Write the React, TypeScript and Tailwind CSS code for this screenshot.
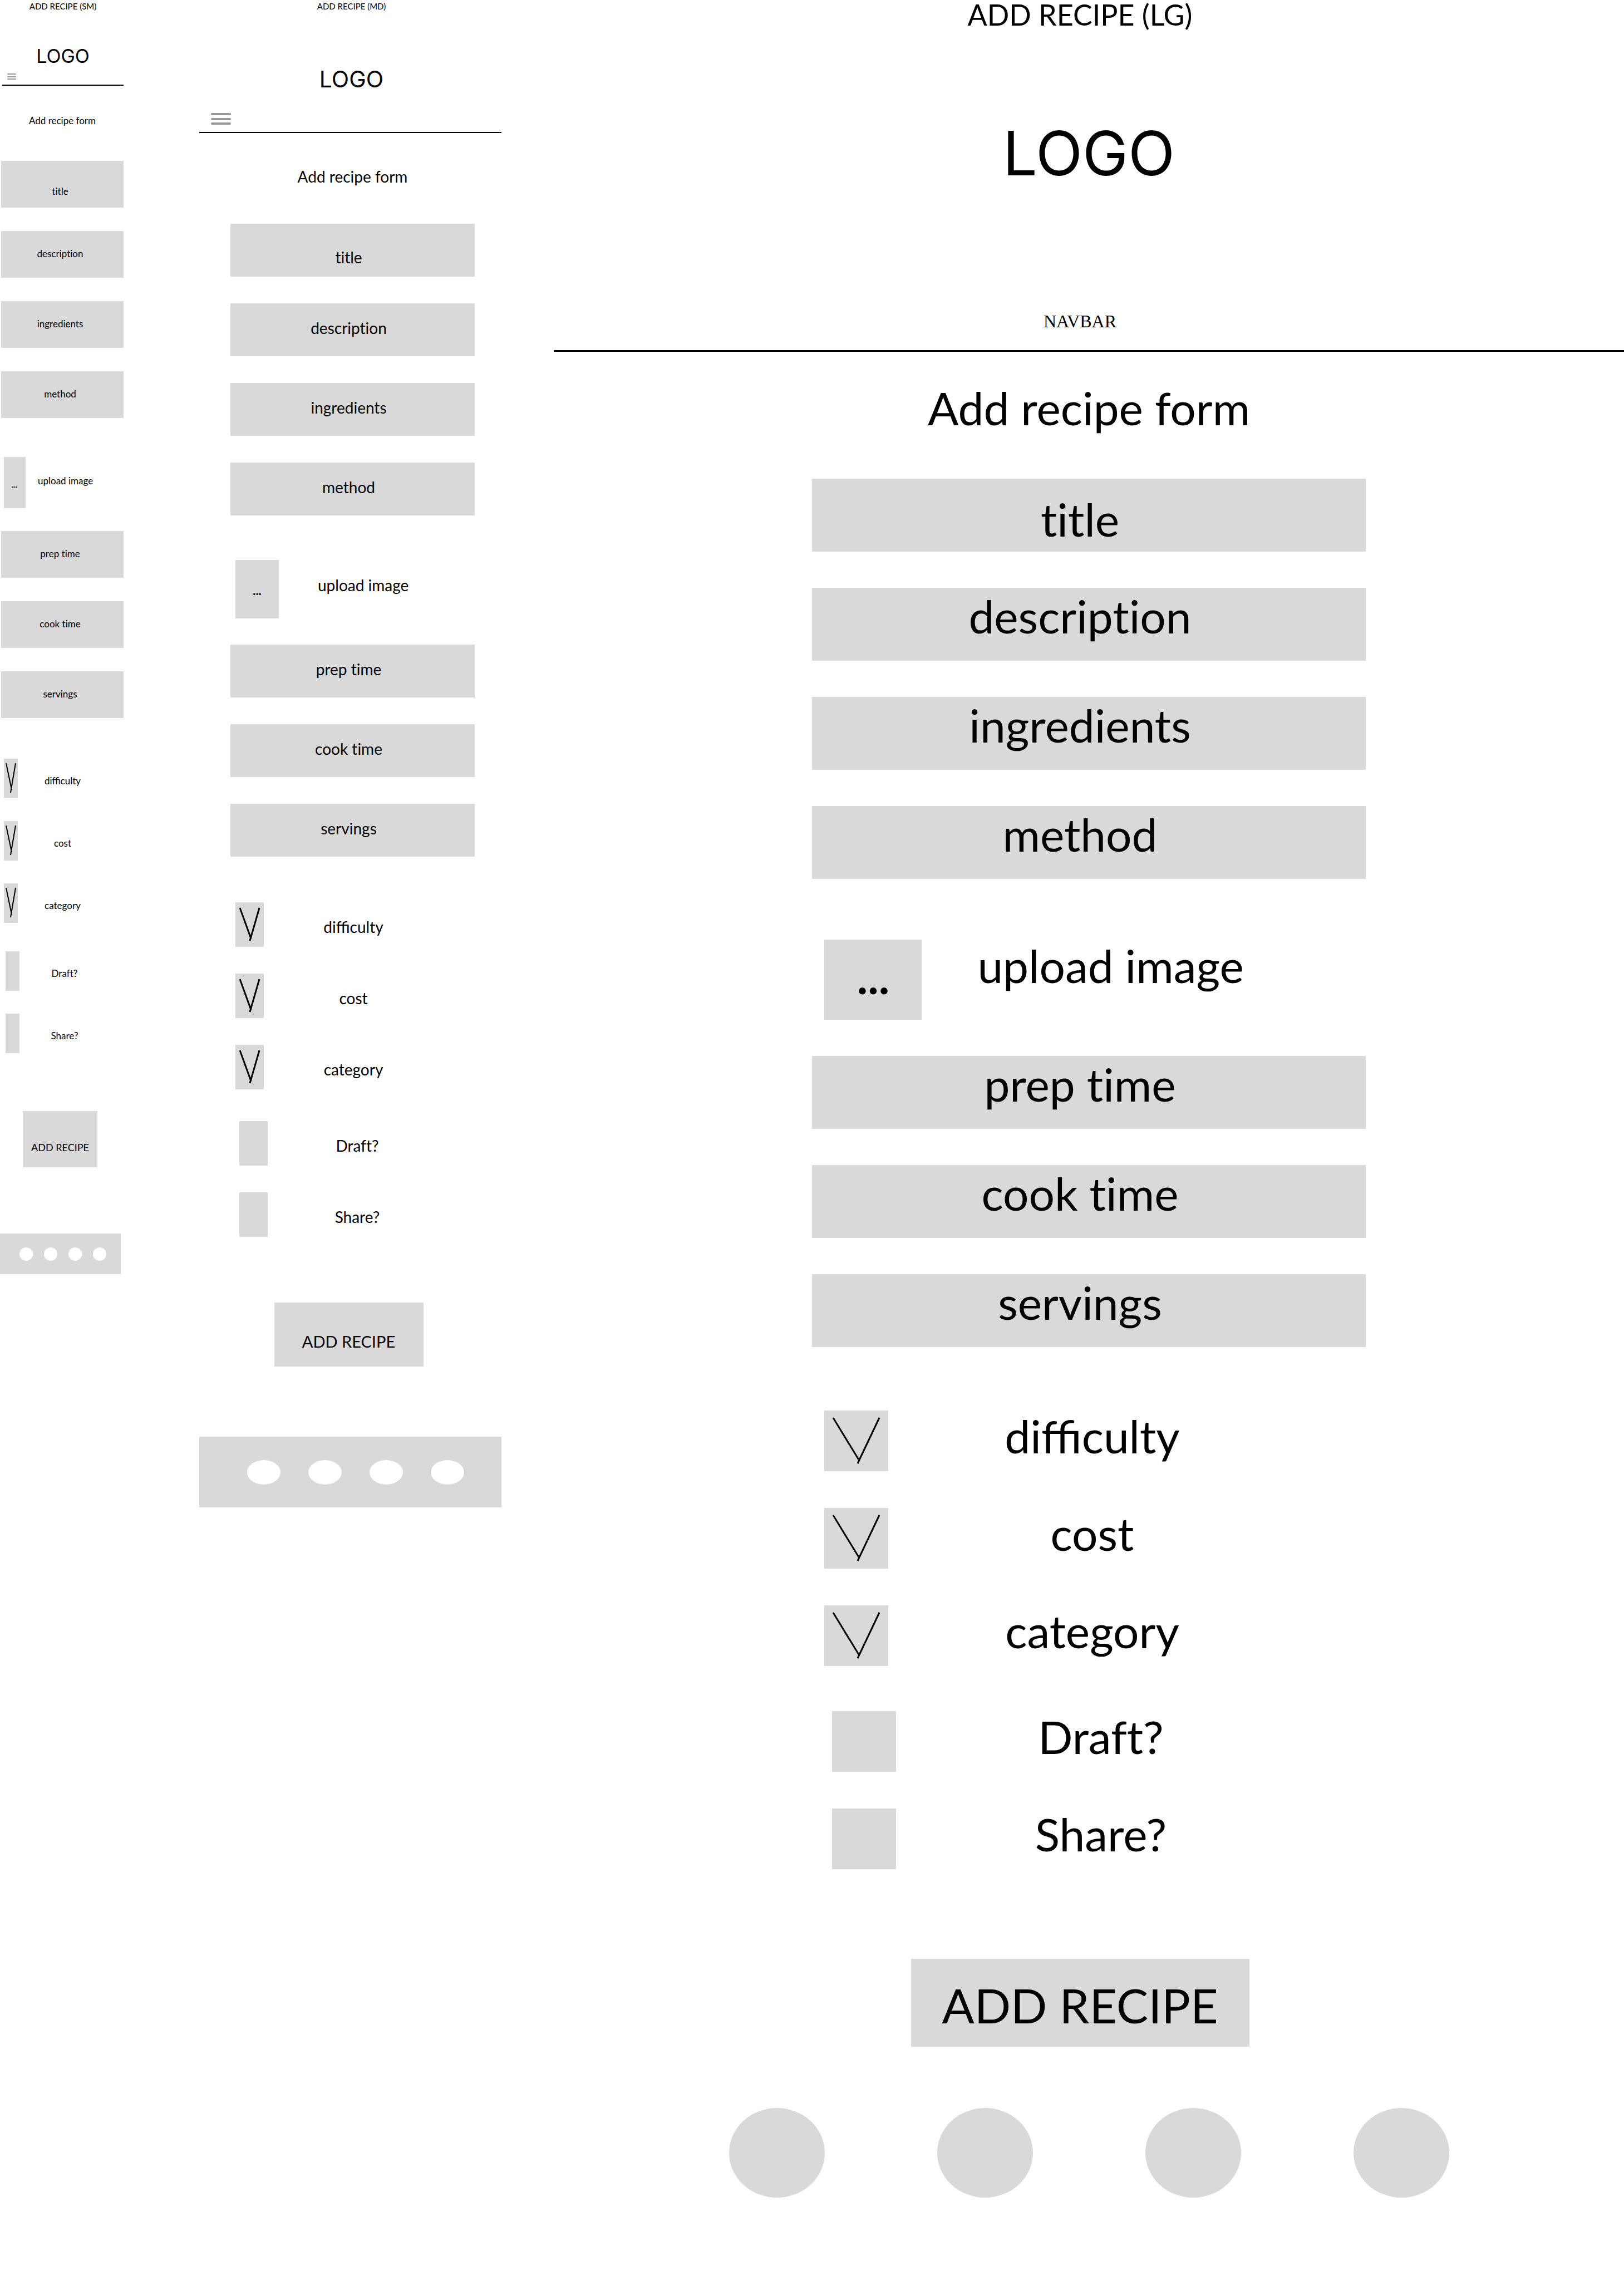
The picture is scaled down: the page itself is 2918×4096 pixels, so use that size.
import React from "react";

type Theme = {
  id: string;
  text: string;
  fields: string;
  field: string;
  titlePad: string;
  fieldPad: string;
  uploadRow: string;
  uploadBox: string;
  uploadLabel: string;
  groupGap: string;
  selects: string;
  selectRow: string;
  box: string;
  optionLabel: string;
  checks: string;
  checkRow: string;
  button: string;
  chevron: { viewBox: string; d: string; stroke: number };
};

const sm: Theme = {
  id: "sm",
  text: "text-[17px]",
  fields: "gap-[42px]",
  field: "h-[84px] pr-2",
  titlePad: "pt-6",
  fieldPad: "pb-1",
  uploadRow: "mt-[70px] mb-[41px] pl-[5px]",
  uploadBox: "h-[92px] w-[39px] pt-2 text-[14px]",
  uploadLabel: "pl-[22px] pb-2",
  groupGap: "mt-[73px]",
  selects: "gap-[41px]",
  selectRow: "pl-[5px] pr-[29px]",
  box: "h-[71px] w-[25px]",
  optionLabel: "pt-2",
  checks: "mt-[51px] gap-[41px]",
  checkRow: "pl-2 pr-[25px]",
  button: "mt-[104px] h-[101px] w-[134px] mr-2 pt-7 text-[18px]",
  chevron: { viewBox: "0 0 25 71", d: "M4 8 L14 56 M21 8 L12 61", stroke: 2 },
};

const md: Theme = {
  id: "md",
  text: "text-[28px]",
  fields: "gap-12",
  field: "h-[95px] pr-[14px]",
  titlePad: "pt-6",
  fieldPad: "pb-2",
  uploadRow: "mt-20 mb-[47px] pl-[9px]",
  uploadBox: "h-[105px] w-[78px] pt-1 text-[22px]",
  uploadLabel: "pl-[70px] pb-4",
  groupGap: "mt-[82px]",
  selects: "gap-12",
  selectRow: "pl-[9px] pr-[57px]",
  box: "h-20 w-[51px]",
  optionLabel: "pt-2",
  checks: "mt-[57px] gap-12",
  checkRow: "pl-4 pr-[50px]",
  button: "mt-[118px] h-[115px] w-[268px] mr-[14px] pt-6 text-[29px]",
  chevron: { viewBox: "0 0 51 80", d: "M8 10 L28 65 M43 10 L26 69", stroke: 3 },
};

const lg: Theme = {
  id: "lg",
  text: "text-[82px]",
  fields: "gap-[65px]",
  field: "h-[131px] pr-8",
  titlePad: "pt-3",
  fieldPad: "pb-8",
  uploadRow: "mt-[109px] mb-[65px] pl-[22px]",
  uploadBox: "h-36 w-[175px] text-[82px] pb-3",
  uploadLabel: "pl-[100px] pb-[52px]",
  groupGap: "mt-[114px]",
  selects: "gap-[66px]",
  selectRow: "pl-[22px] pr-[125px]",
  box: "h-[109px] w-[115px]",
  optionLabel: "pb-5",
  checks: "mt-[81px] gap-[66px]",
  checkRow: "pl-9 pr-[108px]",
  button: "mt-[161px] h-[158px] w-[608px] mr-8 pt-2 text-[86px]",
  chevron: { viewBox: "0 0 115 109", d: "M16 13 L63 90 M99 13 L60 95", stroke: 3 },
};

function Fields({ names, t }: { names: string[]; t: Theme }) {
  return (
    <div className={`flex flex-col ${t.fields}`}>
      {names.map((name) => (
        <input
          key={name}
          type="text"
          aria-label={name}
          placeholder={name}
          className={`w-full bg-[#d9d9d9] text-center [font-variant-ligatures:none] placeholder:text-black placeholder:opacity-100 ${t.field} ${
            name === "title" ? t.titlePad : t.fieldPad
          }`}
        />
      ))}
    </div>
  );
}

function RecipeForm({ t }: { t: Theme }) {
  return (
    <form className={`flex flex-col leading-none ${t.text}`} onSubmit={(e) => e.preventDefault()}>
      <Fields t={t} names={["title", "description", "ingredients", "method"]} />

      <div className={`relative flex ${t.uploadRow}`}>
        <input id={`${t.id}-upload`} type="file" className="sr-only" />
        <label
          htmlFor={`${t.id}-upload`}
          className={`flex shrink-0 items-center justify-center bg-[#d9d9d9] font-bold ${t.uploadBox}`}
        >
          ...
        </label>
        <label htmlFor={`${t.id}-upload`} className={`flex items-center whitespace-nowrap ${t.uploadLabel}`}>
          upload image
        </label>
      </div>

      <Fields t={t} names={["prep time", "cook time", "servings"]} />

      <div className={`flex flex-col ${t.groupGap} ${t.selects}`}>
        {["difficulty", "cost", "category"].map((name) => (
          <div key={name} className={`flex ${t.selectRow}`}>
            <div className={`relative shrink-0 ${t.box}`}>
              <select id={`${t.id}-${name}`} className="size-full appearance-none bg-[#d9d9d9]">
                <option value="" />
              </select>
              <svg
                viewBox={t.chevron.viewBox}
                className="pointer-events-none absolute inset-0 size-full"
                fill="none"
                stroke="black"
                strokeWidth={t.chevron.stroke}
              >
                <path d={t.chevron.d} />
              </svg>
            </div>
            <label
              htmlFor={`${t.id}-${name}`}
              className={`flex flex-1 items-center justify-center ${t.optionLabel}`}
            >
              {name}
            </label>
          </div>
        ))}
      </div>

      <div className={`flex flex-col ${t.checks}`}>
        {["Draft?", "Share?"].map((name) => (
          <div key={name} className={`flex ${t.checkRow}`}>
            <input
              id={`${t.id}-${name}`}
              type="checkbox"
              className={`shrink-0 appearance-none bg-[#d9d9d9] checked:bg-[#999999] ${t.box}`}
            />
            <label
              htmlFor={`${t.id}-${name}`}
              className={`flex flex-1 items-center justify-center [font-variant-ligatures:none] ${t.optionLabel}`}
            >
              {name}
            </label>
          </div>
        ))}
      </div>

      <button type="submit" className={`self-center whitespace-nowrap bg-[#d9d9d9] ${t.button}`}>
        ADD RECIPE
      </button>
    </form>
  );
}

function Burger({ className, bar }: { className: string; bar: string }) {
  return (
    <button type="button" aria-label="Open menu" className={`flex flex-col justify-between ${className}`}>
      <span className={`w-full rounded-full bg-[#999999] ${bar}`} />
      <span className={`w-full rounded-full bg-[#999999] ${bar}`} />
      <span className={`w-full rounded-full bg-[#999999] ${bar}`} />
    </button>
  );
}

function Dots({ dot }: { dot: string }) {
  return (
    <>
      {["Facebook", "Instagram", "Twitter", "YouTube"].map((name) => (
        <a key={name} href="#" aria-label={name} className={`shrink-0 rounded-[50%] ${dot}`} />
      ))}
    </>
  );
}

export default function App() {
  return (
    <main className="grid min-h-screen grid-cols-[358fr_637fr_1923fr] bg-white font-['Lato',sans-serif] text-black">
      <section className="pr-[136px]">
        <h1 className="pl-1 text-center text-[15px] leading-[22px] whitespace-nowrap">ADD RECIPE (SM)</h1>
        <header className="ml-1 flex flex-col border-b-2 border-black pb-[9px]">
          <p className="mt-[62px] text-center font-['Inter',sans-serif] text-[34px] leading-none">LOGO</p>
          <Burger className="mt-[14px] ml-[9px] h-[11px] w-4" bar="h-[2px]" />
        </header>
        <div className="pl-[2px]">
          <h2 className="mt-[53px] mb-[62px] text-center text-[17px] leading-[20px]">Add recipe form</h2>
          <RecipeForm t={sm} />
        </div>
        <footer className="mt-[119px] mr-[5px] flex h-[73px] items-center gap-5 bg-[#d9d9d9] pl-[35px]">
          <Dots dot="size-6 bg-white" />
        </footer>
      </section>

      <section className="pr-[94px]">
        <h1 className="pl-1 text-center text-[15px] leading-[22px] whitespace-nowrap">ADD RECIPE (MD)</h1>
        <header className="flex flex-col border-b-2 border-black pb-[13px]">
          <p className="mt-[100px] pl-1 text-center font-['Inter',sans-serif] text-[41px] leading-none">LOGO</p>
          <Burger className="mt-10 ml-[21px] h-[21px] w-9" bar="h-[4px]" />
        </header>
        <div className="pr-12 pl-14">
          <h2 className="mt-[61px] mb-[68px] text-center text-[28px] leading-[34px]">Add recipe form</h2>
          <RecipeForm t={md} />
        </div>
        <footer className="mt-[126px] flex h-[127px] items-center gap-[50px] bg-[#d9d9d9] pl-[86px]">
          <Dots dot="h-11 w-[60px] bg-white" />
        </footer>
      </section>

      <section>
        <h1 className="pr-8 text-center text-[52px] leading-[52px]">ADD RECIPE (LG)</h1>
        <header className="border-b-3 border-black pb-9">
          <p className="mt-[168px] text-center font-['Inter',sans-serif] text-[110px] leading-none">LOGO</p>
          <nav className="mt-[231px] pr-8 text-center font-['Liberation_Serif',serif] text-[32px] leading-none">
            NAVBAR
          </nav>
        </header>
        <div className="mx-auto w-[51.7%]">
          <h2 className="mt-[51px] mb-[79px] text-center text-[82px] leading-[98px] whitespace-nowrap">
            Add recipe form
          </h2>
          <RecipeForm t={lg} />
        </div>
        <footer className="mt-[110px] flex justify-center gap-[202px]">
          <Dots dot="h-[161px] w-[172px] bg-[#d9d9d9]" />
        </footer>
      </section>
    </main>
  );
}
